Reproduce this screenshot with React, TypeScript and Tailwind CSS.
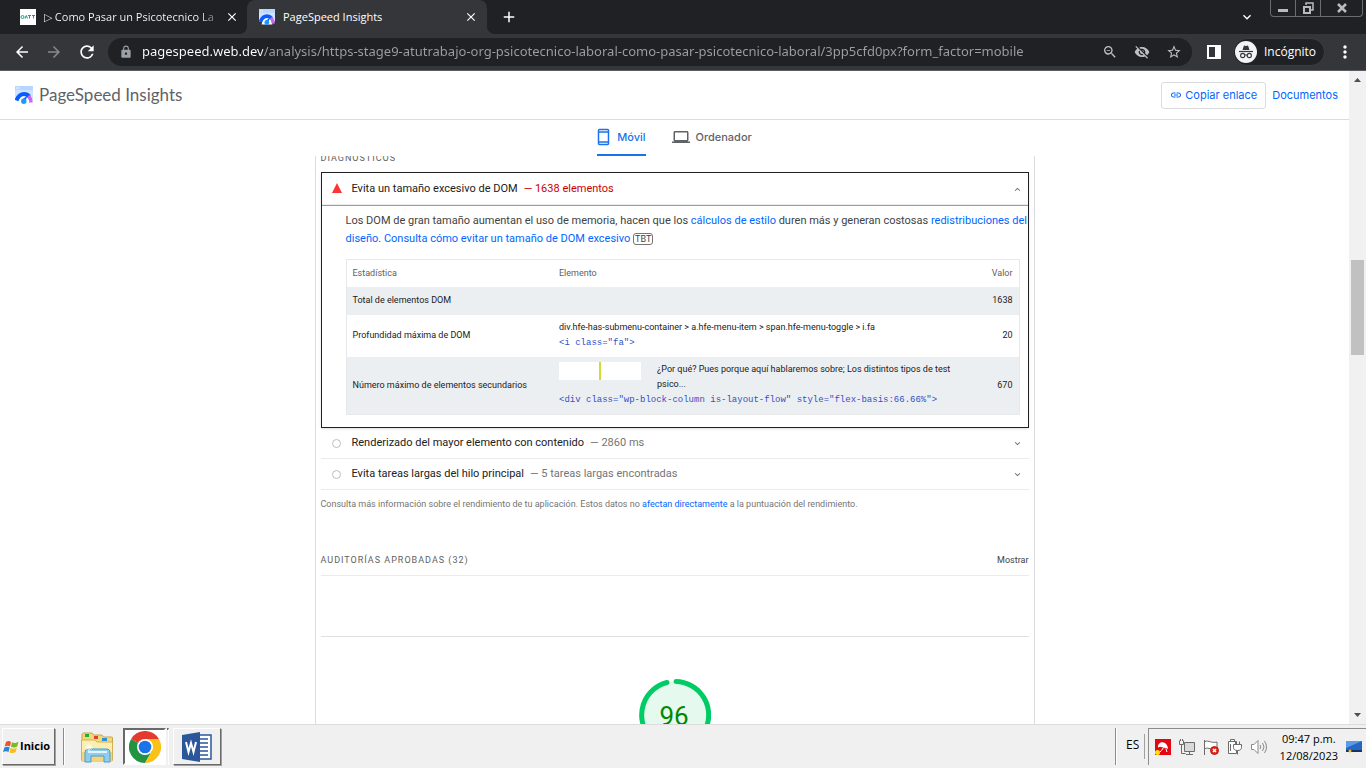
import React, { useState } from "react";
import {
  MdAdd,
  MdArrowBack,
  MdArrowForward,
  MdClose,
  MdExpandLess,
  MdExpandMore,
  MdLaptop,
  MdLink,
  MdLock,
  MdMoreVert,
  MdRefresh,
  MdStarBorder,
  MdVisibilityOff,
  MdZoomOut,
} from "react-icons/md";

const PAGE_URL =
  "pagespeed.web.dev/analysis/https-stage9-atutrabajo-org-psicotecnico-laboral-como-pasar-psicotecnico-laboral/3pp5cfd0px?form_factor=mobile";

const PageSpeedLogo = ({ className }: { className?: string }) => (
  <svg viewBox="0 0 18 18" className={className} aria-hidden="true">
    <path d="M0 1C0 .5.5 0 1 0h16c.5 0 1 .5 1 1v13H0z" fill="#cfe5ff" />
    <path d="M0 1C0 .5.5 0 1 0h16c.5 0 1 .5 1 1v3H0z" fill="#b5d6ff" />
    <circle cx="2" cy="2" r=".7" fill="#fff" />
    <circle cx="4" cy="2" r=".7" fill="#fff" />
    <path d="M3 17.500C3.500 13 6 10.500 9 10.500s5.500 2.500 6 7z" fill="#fff" />
    <path d="M1.500 14.500C3 10.500 5.500 8 9 8c2.200 0 4 .9 5.300 2.500" fill="none" stroke="#0b5cff" strokeWidth="4" />
    <path d="M13.500 10c1.400 1.500 2.300 3.500 2.600 6.500" fill="none" stroke="#c866f5" strokeWidth="3.500" />
    <path d="M12.500 9.500 6.500 14l3.500 2z" fill="#0b5cff" />
    <circle cx="8.800" cy="15.200" r="2.700" fill="#1a9bff" />
  </svg>
);

const ChromeLogo = () => (
  <svg viewBox="0 0 48 48" className="size-8" aria-hidden="true">
    <circle cx="24" cy="24" r="24" fill="#fff" />
    <path d="M24 24 3.200 12A24 24 0 0 1 44.800 12H24z" fill="#e33b2e" />
    <path d="M24 24 3.200 12A24 24 0 0 0 24 48l10.400-18z" fill="#229342" />
    <path d="M24 12h20.800A24 24 0 0 1 24 48l10.400-18z" fill="#fbc116" />
    <circle cx="24" cy="24" r="12" fill="#fff" />
    <circle cx="24" cy="24" r="9.500" fill="#1a73e8" />
  </svg>
);

const WordLogo = () => (
  <svg viewBox="0 0 32 32" className="size-8" aria-hidden="true">
    <path d="M18 4h12v24H18z" fill="#fff" stroke="#2b579a" strokeWidth="1.500" />
    <path d="M19 8h8M19 12h8M19 16h8M19 20h8M19 24h8" stroke="#2b579a" strokeWidth="1.500" />
    <path d="M1 4 19 1v30L1 28z" fill="#2b579a" />
    <path d="m5 11 2.500 10L10 12l2.500 9L15 11" fill="none" stroke="#fff" strokeWidth="2" />
  </svg>
);

const ExplorerLogo = () => (
  <svg viewBox="0 0 34 32" className="h-8 w-[34px]" aria-hidden="true">
    <path d="M2 4c0-1 .5-2 1.500-2H12l1.500 2H22l1.500 2H31c1 0 1.500 0 1.500 1v22H2z" fill="#f3d878" stroke="#c9a545" />
    <path d="M5 3h4v3H5z" fill="#1fae3a" />
    <path d="M14 5h4v3h-4z" fill="#d9432f" />
    <path d="M22 7h5v3h-5z" fill="#2d8fe0" />
    <path d="M1.500 9H15l2 2h15.500v18c0 1-.5 1-1.500 1H3c-1 0-1.500 0-1.500-1z" fill="#fbeeb0" stroke="#d3b255" />
    <path d="M2 21h30v8.500H2z" fill="#f0d67c" />
    <path d="M5 31v-9c0-3 1-4 4-4h17c3 0 4 1 4 4v9h-6v-6H11v6z" fill="#8ecdf0" stroke="#4a9ccb" />
    <path d="M8 21h19" stroke="#dff4ff" strokeWidth="2" />
    <path d="M9 12v8M5 16h8M6.500 13.500l5 5M11.500 13.500l-5 5" stroke="#fff" />
  </svg>
);

const WindowsFlag = () => (
  <svg viewBox="0 0 16 16" className="size-4" aria-hidden="true">
    <path d="M3 3c2-1.500 3.500-1 5 0L7 7.500c-2-1-3.500-1-5.300 0z" fill="#e8562a" />
    <path d="M9 3.300c2 1 3.500 1 6.500-.6l-1.300 4.800C12 9 10 8.800 8 7.800z" fill="#77b82e" />
    <path d="M1.400 8.600c2-1 3.500-1 5.300 0L5.500 13c-1.500-1-3.500-1-5.500 0z" fill="#2b84d4" />
    <path d="M7.700 8.900c2 1 4 1 6.200-.2L12.600 13c-2 1.300-4.200 1.300-6.100.4z" fill="#f9bd16" />
  </svg>
);

const IncognitoIcon = () => (
  <svg viewBox="0 0 22 22" className="size-[22px]" aria-hidden="true">
    <circle cx="11" cy="11" r="11" fill="#f1f3f4" />
    <path d="M7.500 9 8.700 5.200c.2-.6.700-.7 1.200-.5l1.100.4 1.100-.4c.5-.2 1-.1 1.200.5L14.500 9z" fill="#35363a" />
    <path d="M4 10.500h14" stroke="#35363a" strokeWidth="1.200" />
    <circle cx="7.700" cy="14.500" r="2.100" fill="none" stroke="#35363a" strokeWidth="1.100" />
    <circle cx="14.300" cy="14.500" r="2.100" fill="none" stroke="#35363a" strokeWidth="1.100" />
    <path d="M9.800 14.200q1.200-.7 2.400 0" fill="none" stroke="#35363a" />
  </svg>
);

const WindowControls = () => (
  <div className="flex h-[17px] w-[93px] self-start rounded-b border border-t-0 border-[#6b6c6f] text-[#b9babc]">
    <button aria-label="Minimizar" className="flex w-[25px] items-center justify-center border-r border-[#6b6c6f]">
      <svg viewBox="0 0 10 10" className="size-[10px]">
        <path d="M0 6h10v3H0z" fill="currentColor" />
      </svg>
    </button>
    <button aria-label="Restaurar" className="flex w-[25px] items-center justify-center border-r border-[#6b6c6f]">
      <svg viewBox="0 0 12 12" className="size-3" fill="none" stroke="currentColor">
        <path d="M4 3V1h7v7H9" strokeWidth="1.500" />
        <path d="M2 5h6v6H2z" strokeWidth="2" />
      </svg>
    </button>
    <button aria-label="Cerrar ventana" className="flex flex-1 items-center justify-center">
      <svg viewBox="0 0 10 10" className="size-[10px]">
        <path d="M1 1l8 8M9 1 1 9" stroke="currentColor" strokeWidth="2.500" />
      </svg>
    </button>
  </div>
);

const TabStrip = () => (
  <div className="flex h-[34px] items-center bg-[#202124] font-['Open_Sans',sans-serif] text-[12px] text-white">
    <div className="flex w-[247px] items-center pl-5">
      <svg viewBox="0 0 16 16" className="size-4 shrink-0" aria-hidden="true">
        <path d="M0 0h16v16H0z" fill="#fff" />
        <circle cx="2.500" cy="8" r="1.500" fill="none" stroke="#1a9a8e" />
        <path d="M5 9.500 6.300 6.500l1.200 3M8 6.500h3M9.500 6.500v3M12 6.500h3M13.500 6.500v3" stroke="#1a9a8e" fill="none" />
      </svg>
      <span className="ml-2 w-[176px] overflow-hidden bg-[linear-gradient(90deg,#fff_155px,transparent_180px)] bg-clip-text text-[11px] whitespace-nowrap text-transparent">
        ▷ Como Pasar un Psicotecnico La
      </span>
      <button aria-label="Cerrar pestaña" className="ml-[5px]">
        <MdClose className="size-[14px]" />
      </button>
    </div>
    <div className="relative flex h-full w-[240px] items-center rounded-t-lg bg-[#35363a] pl-3">
      <span className="absolute bottom-0 -left-2 size-2 bg-[radial-gradient(circle_at_0_0,#202124_8px,#35363a_8px)]" />
      <span className="absolute -right-2 bottom-0 size-2 bg-[radial-gradient(circle_at_100%_0,#202124_8px,#35363a_8px)]" />
      <PageSpeedLogo className="size-4" />
      <span className="ml-2 flex-1 text-[11px] whitespace-nowrap">PageSpeed Insights</span>
      <button aria-label="Cerrar pestaña" className="mr-[9px]">
        <MdClose className="size-[14px]" />
      </button>
    </div>
    <button aria-label="Nueva pestaña" className="ml-[13px]">
      <MdAdd className="size-[18px]" />
    </button>
    <button aria-label="Buscar pestañas" className="mr-[15px] ml-auto">
      <MdExpandMore className="size-4" />
    </button>
    <div className="mr-[3px] self-start">
      <WindowControls />
    </div>
  </div>
);

const Toolbar = () => (
  <div className="flex h-[37px] items-center border-b border-[#5c5c62] bg-[#35363a] font-['Open_Sans',sans-serif] text-white">
    <div className="flex w-[108px] shrink-0 items-center gap-[14px] pl-[13px]">
      <button aria-label="Atrás">
        <MdArrowBack className="size-[18px]" />
      </button>
      <button aria-label="Adelante" className="text-[#88898c]">
        <MdArrowForward className="size-[18px]" />
      </button>
      <button aria-label="Recargar">
        <MdRefresh className="size-5" />
      </button>
    </div>
    <div className="flex h-7 flex-1 items-center gap-4 rounded-full bg-[#202124] pr-[10px] pl-[11px] text-[#bdc1c6]">
      <MdLock className="size-[14px] shrink-0 text-[#9aa0a6]" />
      <input
        aria-label="Dirección"
        defaultValue={PAGE_URL}
        className="-ml-[7px] min-w-0 flex-1 bg-[linear-gradient(90deg,#fff_121px,#9aa0a6_121px)] bg-clip-text font-['Noto_Sans',sans-serif] text-[13px] text-transparent outline-none"
      />
      <button aria-label="Zoom">
        <MdZoomOut className="size-4" />
      </button>
      <button aria-label="Cookies bloqueadas">
        <MdVisibilityOff className="size-4" />
      </button>
      <button aria-label="Añadir a marcadores">
        <MdStarBorder className="size-4" />
      </button>
    </div>
    <button aria-label="Panel lateral" className="ml-[15px]">
      <svg viewBox="0 0 14 14" className="size-[14px]">
        <path d="M0 0h14v14H0zM2 2v10h6V2z" fill="#fff" fillRule="evenodd" />
      </svg>
    </button>
    <button className="ml-3 flex h-7 w-[92px] items-center gap-[7px] rounded-full border border-[#3c3d41] bg-[#202124] pl-px text-[12px]">
      <IncognitoIcon />
      Incógnito
    </button>
    <button aria-label="Menú" className="mr-[11px] ml-[10px]">
      <MdMoreVert className="size-[20px]" />
    </button>
  </div>
);

const PageHeader = () => (
  <header className="flex h-[49px] shrink-0 items-center border-b border-[#dadce0] pr-[11px] pl-[15px]">
    <PageSpeedLogo className="size-[18px]" />
    <span className="ml-[6px] font-[Lato,sans-serif] text-[17px] text-[#5f6368]">PageSpeed Insights</span>
    <button className="ml-auto flex h-[27px] items-center gap-[3px] rounded-[3px] border border-[#dadce0] px-2 font-[Inter,sans-serif] text-[11px] text-[#06f]">
      <MdLink className="size-3" />
      Copiar enlace
    </button>
    <a href="#documentos" className="ml-[6px] font-[Inter,sans-serif] text-[11px] text-[#06f]">
      Documentos
    </a>
  </header>
);

const DeviceTabs = () => {
  const [device, setDevice] = useState("mobile");
  const tab = "flex h-full items-center gap-[6px] border-b-2 font-[Inter,sans-serif] text-[11px] font-medium";
  const active = "border-[#1a73e8] text-[#1a73e8]";
  const idle = "border-transparent text-[#5f6368]";
  return (
    <div role="tablist" className="flex h-9 shrink-0 justify-center gap-[26px]">
      <button
        role="tab"
        aria-selected={device === "mobile"}
        onClick={() => setDevice("mobile")}
        className={`${tab} ${device === "mobile" ? active : idle}`}
      >
        <svg viewBox="0 0 14 18" className="h-[18px] w-[14px]" fill="none" stroke="currentColor">
          <rect x="1.500" y="1.500" width="10" height="15" rx="1" strokeWidth="1.500" />
          <path d="M1.500 4h10M1.500 14h10" strokeWidth="1.500" />
        </svg>
        Móvil
      </button>
      <button
        role="tab"
        aria-selected={device === "desktop"}
        onClick={() => setDevice("desktop")}
        className={`${tab} ${device === "desktop" ? active : idle}`}
      >
        <MdLaptop className="h-[18px] w-[18px]" />
        Ordenador
      </button>
    </div>
  );
};

const DomSizeTable = () => (
  <table className="mt-[11px] w-full table-fixed border border-[#e8e8e8] text-left text-[9px] leading-[15px] text-[#212121]">
    <thead>
      <tr className="h-[27px] text-[#616161]">
        <th className="w-[207px] px-[6px] font-normal">Estadística</th>
        <th className="px-[6px] font-normal">Elemento</th>
        <th className="w-[60px] px-[6px] text-right font-normal">Valor</th>
      </tr>
    </thead>
    <tbody>
      <tr className="h-7 bg-[#eceff1]">
        <td className="px-[6px]">Total de elementos DOM</td>
        <td />
        <td className="px-[6px] text-right">1638</td>
      </tr>
      <tr className="h-[42px]">
        <td className="px-[6px]">Profundidad máxima de DOM</td>
        <td className="px-[6px]">
          <div>div.hfe-has-submenu-container &gt; a.hfe-menu-item &gt; span.hfe-menu-toggle &gt; i.fa</div>
          <code className="block font-['Liberation_Mono',monospace] leading-[17px] text-[#3350c8]">{'<i class="fa">'}</code>
        </td>
        <td className="px-[6px] text-right">20</td>
      </tr>
      <tr className="h-[58px] bg-[#eceff1]">
        <td className="px-[6px]">Número máximo de elementos secundarios</td>
        <td className="px-[6px]">
          <div className="flex gap-4">
            <div className="flex h-[18px] w-[82px] shrink-0 justify-center bg-white">
              <div className="w-[2px] bg-[#cddc39]" />
            </div>
            <div className="max-w-[310px]">¿Por qué? Pues porque aquí hablaremos sobre; Los distintos tipos de test psico...</div>
          </div>
          <code className="block font-['Liberation_Mono',monospace] leading-[17px] whitespace-nowrap text-[#3350c8]">
            {'<div class="wp-block-column is-layout-flow" style="flex-basis:66.66%">'}
          </code>
        </td>
        <td className="px-[6px] text-right">670</td>
      </tr>
    </tbody>
  </table>
);

const AuditRow = ({ title, value }: { title: string; value: string }) => (
  <button className="flex h-[31px] w-full items-center border-b border-[#ebebeb] pt-px pr-[6px] pl-[11px] text-left text-[11px]">
    <span className="mr-[11px] size-[9px] rounded-full border border-[#bdbdbd]" />
    <span className="text-[#212121]">{title}</span>
    <span className="ml-[6px] text-[#757575]">— {value}</span>
    <MdExpandMore className="ml-auto size-[11px] text-[#616161]" />
  </button>
);

const Report = () => (
  <main className="mx-auto min-h-0 w-full max-w-[720px] flex-1 overflow-hidden border-x border-[#dadce0] px-[5px] font-[Roboto,sans-serif]">
    <h2 className="-mt-[5px] h-[15px] text-[9px] leading-[15px] tracking-[1px] text-[#616161] uppercase">Diagnósticos</h2>
    <section className="mt-[6px] border border-[#212121] pb-3 shadow-sm">
      <button
        aria-expanded="true"
        className="flex h-8 w-full items-center border-b border-[#ebebeb] pt-[2px] pr-[5px] pl-[10px] text-left text-[11px]"
      >
        <svg viewBox="0 0 10 10" className="mr-[10px] mb-1 size-[10px]" aria-hidden="true">
          <path d="m5 0 5 10H0z" fill="#f33" />
        </svg>
        <span className="text-[#212121]">Evita un tamaño excesivo de DOM</span>
        <span className="ml-[6px] text-[#c00]">— 1638 elementos</span>
        <MdExpandLess className="ml-auto size-[11px] text-[#616161]" />
      </button>
      <div className="border-t border-[#7aa0e8] pt-[6px] pl-6">
        <p className="text-[11px] leading-[18px] text-[#424242]">
          Los DOM de gran tamaño aumentan el uso de memoria, hacen que los{" "}
          <a href="#estilo" className="text-[#06f]">cálculos de estilo</a> duren más y generan costosas{" "}
          <a href="#reflow" className="text-[#06f]">redistribuciones del diseño</a>.{" "}
          <a href="#dom" className="text-[#06f]">Consulta cómo evitar un tamaño de DOM excesivo</a>{" "}
          <span className="rounded-[3px] border border-[#757575] px-px text-[9px]">TBT</span>
        </p>
        <div className="pr-2">
          <DomSizeTable />
        </div>
      </div>
    </section>
    <AuditRow title="Renderizado del mayor elemento con contenido" value="2860 ms" />
    <AuditRow title="Evita tareas largas del hilo principal" value="5 tareas largas encontradas" />
    <p className="mt-[7px] text-[9px] leading-[15px] text-[#757575]">
      Consulta más información sobre el rendimiento de tu aplicación. Estos datos no{" "}
      <a href="#puntuacion" className="text-[#06f]">afectan directamente</a> a la puntuación del rendimiento.
    </p>
    <div className="mt-[33px] flex h-[31px] items-center justify-between border-b border-[#ebebeb] pt-[2px] text-[9px] text-[#616161]">
      <h2 className="tracking-[1px] uppercase">Auditorías aprobadas (32)</h2>
      <button className="text-[#424242]">Mostrar</button>
    </div>
    <div className="mt-[60px] flex justify-center border-t border-[#e0e0e0] pt-[42px]">
      <svg viewBox="0 0 72 72" className="size-[72px]" role="img">
        <circle cx="36" cy="36" r="34" fill="#e6f9ef" />
        <path d="M37 2.500A33.500 33.500 0 1 1 28 3.500" fill="none" stroke="#0c6" strokeWidth="5" strokeLinecap="round" />
        <text x="35" y="46" textAnchor="middle" fill="#080" className="font-[Roboto,sans-serif] text-[26px]">
          96
        </text>
      </svg>
    </div>
  </main>
);

const Scrollbar = () => (
  <div className="flex w-[17px] shrink-0 flex-col items-center bg-[#f1f1f1]">
    <svg viewBox="0 0 17 17" className="size-[17px]" aria-hidden="true">
      <path d="m5 11 3.500-4L12 11z" fill="#505050" />
    </svg>
    <div className="grow-[172]" />
    <div className="w-[13px] grow-[95] bg-[#c1c1c1]" />
    <div className="grow-[352]" />
    <svg viewBox="0 0 17 17" className="size-[17px]" aria-hidden="true">
      <path d="m5 6 3.500 4L12 6z" fill="#505050" />
    </svg>
  </div>
);

const TrayIcons = () => (
  <div className="flex items-center gap-2 text-[#6b6b6b]">
    <svg viewBox="0 0 16 16" className="size-4">
      <path d="M0 0h16v16H0z" fill="#e30613" />
      <path d="M3 8.500C2.500 4 7 2 10 4c2 1.500 3 3.500 3 6-1-1-2-1-3-.5-.5-1-1.500-1.500-3-1.200C6 7.500 4.500 7.500 3 8.500z" fill="#fff" />
      <path d="M9 7c-.5 2-2 4-4 6M11 10l1 3" stroke="#fff" fill="none" />
      <circle cx="2.500" cy="13.500" r="2.500" fill="#ffe600" />
    </svg>
    <svg viewBox="0 0 16 16" className="size-4" fill="none" stroke="currentColor">
      <path d="M5.500 3.500h10v9h-10z" fill="#d9d9d9" />
      <path d="M7 15.500h7M10.500 12.500v3M.5 1.500v4h4v-4M1.500 0v2M3.500 0v2M2.500 5.500v9h4" />
    </svg>
    <svg viewBox="0 0 16 16" className="size-4" fill="none" stroke="currentColor">
      <path d="M1.500 1v15M2 2.500c4-1.500 6 2 12 .5v7c-6 1.500-8-2-12-.5" fill="#fff" />
      <circle cx="11.500" cy="11.500" r="4" fill="#d9281c" stroke="#b81c12" />
      <path d="m10 10 3 3M13 10l-3 3" stroke="#fff" strokeWidth="1.500" />
    </svg>
    <svg viewBox="0 0 16 16" className="size-4" fill="none" stroke="currentColor">
      <path d="M1.500 2.500h8v12h-8zM3.500 2.500v-2h4v2M3.500 5v7" fill="#fff" />
      <path d="M6.500 5.500h8v3c0 2-1.500 3-4 3s-4-1-4-3zM8.500 5.500v-3M12.500 5.500v-3M10.500 11.500v4" fill="#fff" />
    </svg>
    <svg viewBox="0 0 16 16" className="size-4" fill="none" stroke="#8a8a8a">
      <path d="M.5 5.500H3l4-4v13l-4-4H.5z" fill="#fff" />
      <path d="M9 6q1.500 2 0 4M11.500 4q3 4 0 8M13.500 2q4 6 0 12" />
    </svg>
  </div>
);

const Taskbar = () => (
  <footer className="flex h-11 shrink-0 items-stretch border-t border-[#dcdcdc] bg-[#f0f0f0] py-[3px] font-['Open_Sans',sans-serif] text-black">
    <button className="ml-[2px] flex w-[53px] items-center gap-px border border-t-white border-r-[#696969] border-b-[#696969] border-l-white text-[11px] font-bold shadow-[1px_1px_0_#a0a0a0]">
      <WindowsFlag />
      Inicio
    </button>
    <div className="ml-2 w-[2px] border-r border-l border-r-white border-l-[#8c8c8c]" />
    <div className="flex w-[58px] items-center justify-center pl-[6px]">
      <button aria-label="Explorador">
        <ExplorerLogo />
      </button>
    </div>
    <button
      aria-label="Chrome"
      className="flex w-[43px] items-center justify-center border-2 border-t-[#696969] border-r-white border-b-white border-l-[#696969] bg-white"
    >
      <ChromeLogo />
    </button>
    <div className="ml-px w-[2px] border-t-2 border-r border-t-[#696969] border-r-white" />
    <button
      aria-label="Word"
      className="ml-1 flex w-12 items-center justify-center border border-t-white border-r-[#696969] border-b-[#696969] border-l-white shadow-[1px_1px_0_#a0a0a0]"
    >
      <WordLogo />
    </button>
    <div className="ml-auto w-[2px] border-r border-l border-r-white border-l-[#8c8c8c]" />
    <div className="flex w-[27px] items-center justify-center pb-1 pl-[5px] text-[12px]">ES</div>
    <div className="my-[6px] w-px bg-[#a0a0a0]" />
    <div className="ml-[3px] flex items-center border-t border-l border-[#8c8c8c] pr-1 pl-[6px]">
      <TrayIcons />
      <div className="ml-[13px] text-center text-[11px] leading-[17px]">
        <div>09:47 p.m.</div>
        <div>12/08/2023</div>
      </div>
      <svg viewBox="0 0 16 14" className="ml-2 h-[14px] w-4" aria-hidden="true">
        <path d="M0 1h16v9H0z" fill="#2567c4" />
        <path d="M0 1h16L0 8z" fill="#5d9be8" />
        <path d="M0 10h16v2H0z" fill="#17345f" />
        <circle cx="4" cy="11" r="1.500" fill="#f9bd16" />
      </svg>
    </div>
  </footer>
);

const App: React.FC = () => {
  return (
    <div className="flex h-screen flex-col overflow-hidden bg-white">
      <div className="shrink-0">
        <TabStrip />
        <Toolbar />
      </div>
      <div className="flex min-h-0 flex-1">
        <div className="flex min-w-0 flex-1 flex-col">
          <PageHeader />
          <DeviceTabs />
          <Report />
        </div>
        <Scrollbar />
      </div>
      <Taskbar />
    </div>
  );
};

export default App;
